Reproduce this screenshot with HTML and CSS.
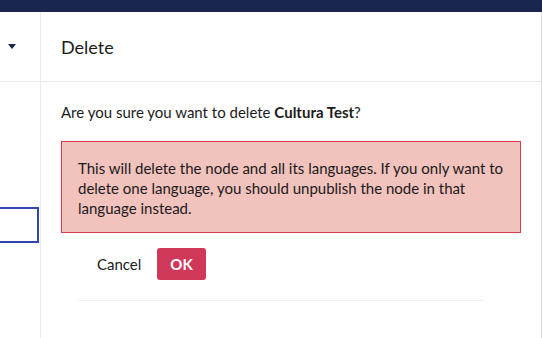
FILE: index.html
```html
<!DOCTYPE html>
<html lang="en">
<head>
    <meta charset="UTF-8">
    <meta name="viewport" content="width=device-width, initial-scale=1.0">
    <title>Delete</title>
    <link rel="stylesheet" href="styles.css">
</head>
<body>
    <div class="topbar"></div>
    <div class="layout">
        <div class="sidebar">
            <div class="sidebar-head">
                <span class="caret"></span>
            </div>
            <div class="sidebar-input"></div>
        </div>

        <div class="dialog">
            <div class="dialog-head">
                <h2>Delete</h2>
            </div>
            <div class="dialog-body">
                <p class="question">Are you sure you want to delete <strong>Cultura Test</strong>?</p>
                <div class="alert">
                    This will delete the node and all its languages. If you only want to delete one language, you should unpublish the node in that language instead.
                </div>
                <div class="actions">
                    <button class="btn-link">Cancel</button>
                    <button class="btn-danger">OK</button>
                </div>
                <div class="divider"></div>
            </div>
        </div>
    </div>
</body>
</html>
```

FILE: styles.css
```css
html, body {
    margin: 0;
    padding: 0;
    height: 100%;
}
body {
    font-family: Lato, 'Open Sans', Arial, sans-serif;
    color: #1b1b1b;
    background: #fff;
    overflow: hidden;
}
.topbar {
    height: 12px;
    background: #1b264f;
}
.layout {
    display: flex;
    height: calc(100% - 12px);
}

/* левая колонка */
.sidebar {
    width: 40px;
    border-right: 1px solid #e9e9eb;
    flex-shrink: 0;
}
.sidebar-head {
    height: 69px;
    border-bottom: 1px solid #e9e9eb;
    position: relative;
}
.caret {
    position: absolute;
    left: 8px;
    top: 32px;
    width: 0;
    height: 0;
    border-left: 4px solid transparent;
    border-right: 4px solid transparent;
    border-top: 5px solid #1b264f;
}
.sidebar-input {
    margin-top: 125px;
    height: 32px;
    border: 2px solid #3544b1;
    border-left: none;
    width: 37px;
}

/* диалог */
.dialog {
    flex: 1;
    border-right: 1px solid #dcdcdc;
}
.dialog-head {
    height: 69px;
    border-bottom: 1px solid #e9e9eb;
    display: flex;
    align-items: center;
    padding: 0 20px;
}
.dialog-head h2 {
    margin: 0;
    font-size: 18px;
    font-weight: 400;
}
.dialog-body {
    padding: 20px 20px 0;
}
.question {
    margin: 0 0 19px;
    font-size: 15px;
    line-height: 20px;
}
.question strong {
    font-weight: 700;
}
.alert {
    background: #f2c2bd;
    border: 1px solid #d83d4a;
    padding: 16px 16px 14px;
    font-size: 15px;
    line-height: 20px;
}
.actions {
    display: flex;
    margin: 15px 0 0 20px;
}
.actions button {
    height: 32px;
    font-family: inherit;
    font-size: 15px;
    border: none;
    border-radius: 3px;
    cursor: pointer;
}
.btn-link {
    background: none;
    color: #1b1b1b;
    padding: 0 16px;
}
.btn-danger {
    background: #d0385a;
    color: #fff;
    font-weight: 700;
    padding: 0 13px;
}
.divider {
    margin: 20px 37px 0 17px;
    border-top: 1px solid #f0f0f0;
}
```
